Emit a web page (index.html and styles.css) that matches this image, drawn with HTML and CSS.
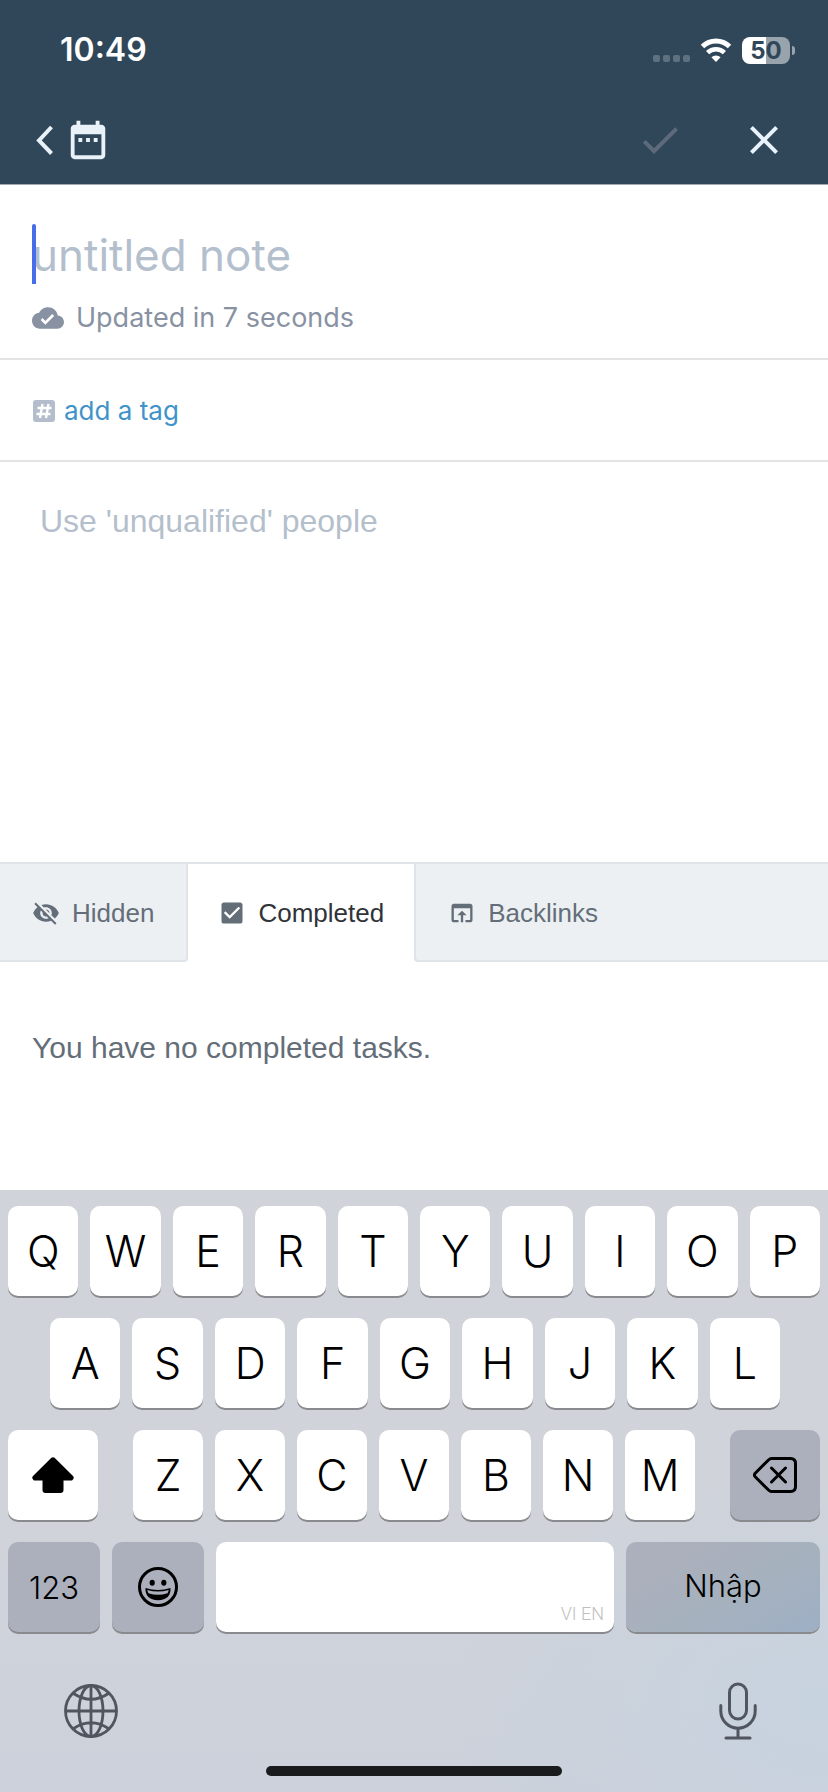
FILE: index.html
```html
<!DOCTYPE html>
<html lang="en">
<head>
<meta charset="utf-8">
<meta name="viewport" content="width=device-width, initial-scale=1">
<title>Note</title>
<link rel="stylesheet" href="styles.css">
</head>
<body>
<div class="screen">
  <header class="header">
    <div class="status">
      <time class="clock">10:49</time>
      <div class="indicators">
        <span class="cell"><i></i><i></i><i></i><i></i></span>
        <svg class="wifi" viewBox="0 0 32 24" aria-hidden="true">
          <path d="M2.500 8.500a19.500 19.500 0 0 1 27 0" fill="none" stroke="#fff" stroke-width="5"/>
          <path d="M7.600 14.600a12 12 0 0 1 16.800 0" fill="none" stroke="#fff" stroke-width="4.500"/>
          <path d="M16 24l-4.600-4.700a6.600 6.600 0 0 1 9.200 0z" fill="#fff"/>
        </svg>
        <span class="battery"><span class="battery-level">50</span><span class="battery-tip"></span></span>
      </div>
    </div>
    <nav class="nav">
      <button class="nav-button back" aria-label="Back to calendar">
        <svg class="chevron" viewBox="0 0 20 30"><path d="M16.500 2L4 15.500l12.500 13" fill="none" stroke="currentColor" stroke-width="4"/></svg>
        <svg class="calendar" viewBox="0 0 24 24"><path fill="currentColor" d="M9 11H7v2h2v-2zm4 0h-2v2h2v-2zm4 0h-2v2h2v-2zm2-7h-1V2h-2v2H8V2H6v2H5c-1.110 0-1.990.9-1.990 2L3 20c0 1.100.89 2 2 2h14c1.100 0 2-.9 2-2V6c0-1.100-.9-2-2-2zm0 16H5V9h14v11z"/></svg>
      </button>
      <div class="nav-actions">
        <button class="nav-button done" aria-label="Done" disabled><svg class="nav-icon" viewBox="0 0 24 24"><path fill="currentColor" d="M9 16.170L4.830 12l-1.420 1.410L9 19 21 7l-1.410-1.410z"/></svg></button>
        <button class="nav-button" aria-label="Close"><svg class="nav-icon" viewBox="0 0 24 24"><path fill="currentColor" d="M19 6.410L17.590 5 12 10.590 6.410 5 5 6.410 10.590 12 5 17.590 6.410 19 12 13.410 17.590 19 19 17.590 13.410 12z"/></svg></button>
      </div>
    </nav>
  </header>

  <main class="note">
    <section class="heading">
      <div class="title-field">
        <input class="title" type="text" placeholder="untitled note" aria-label="Note title">
        <span class="caret"></span>
      </div>
      <p class="updated">
        <svg class="cloud" viewBox="0 0 24 24" aria-hidden="true"><path fill="currentColor" d="M19.350 10.040C18.670 6.590 15.640 4 12 4 9.110 4 6.600 5.640 5.350 8.040 2.340 8.360 0 10.910 0 14c0 3.310 2.690 6 6 6h13c2.760 0 5-2.240 5-5 0-2.640-2.050-4.780-4.650-4.960zM10 17l-3.500-3.500 1.410-1.410L10 14.170 15.180 9l1.410 1.410L10 17z"/></svg>
        <span>Updated in 7 seconds</span>
      </p>
    </section>
    <section class="tags">
      <svg class="hash" viewBox="0 0 22 22" aria-hidden="true"><rect width="22" height="22" rx="3" fill="#b4bdcb"/><path d="M9.500 4L7 18M15.500 4L13 18M4.500 8h14M3.500 14h14" fill="none" stroke="#fff" stroke-width="2.400"/></svg>
      <a class="add-tag" href="#">add a tag</a>
    </section>
    <textarea class="editor" placeholder="Use 'unqualified' people" aria-label="Note text"></textarea>
    <div class="tabs" role="tablist">
      <button class="tab tab-first" role="tab"><svg class="tab-icon" viewBox="0 0 24 24"><path fill="currentColor" d="M12 7c2.760 0 5 2.240 5 5 0 .65-.13 1.260-.36 1.830l2.920 2.920c1.510-1.260 2.700-2.890 3.430-4.750-1.730-4.390-6-7.500-11-7.500-1.400 0-2.740.25-3.980.7l2.160 2.160C10.740 7.130 11.350 7 12 7zM2 4.270l2.280 2.280.46.46C3.080 8.300 1.780 10.020 1 12c1.730 4.390 6 7.500 11 7.500 1.550 0 3.030-.3 4.380-.84l.42.42L19.730 22 21 20.730 3.270 3 2 4.270zM7.530 9.800l1.550 1.550c-.05.21-.08.43-.08.65 0 1.660 1.340 3 3 3 .22 0 .44-.03.65-.08l1.550 1.550c-.67.33-1.410.53-2.200.53-2.760 0-5-2.240-5-5 0-.79.2-1.530.53-2.200zm4.310-.78l3.150 3.150.02-.16c0-1.660-1.340-3-3-3l-.17.01z"/></svg>Hidden</button>
      <button class="tab tab-active" role="tab" aria-selected="true"><svg class="tab-icon" viewBox="0 0 24 24"><path fill="currentColor" d="M19 3H5c-1.110 0-2 .9-2 2v14c0 1.100.89 2 2 2h14c1.110 0 2-.9 2-2V5c0-1.100-.89-2-2-2zm-9 14l-5-5 1.410-1.410L10 14.170l7.590-7.590L19 8l-9 9z"/></svg>Completed</button>
      <button class="tab tab-last" role="tab"><svg class="tab-icon" viewBox="0 0 24 24"><path fill="currentColor" d="M19 4H5c-1.110 0-2 .9-2 2v12c0 1.100.89 2 2 2h4v-2H5V8h14v10h-4v2h4c1.100 0 2-.9 2-2V6c0-1.100-.89-2-2-2zm-7 6l-4 4h3v6h2v-6h3l-4-4z"/></svg>Backlinks</button>
    </div>
    <p class="empty">You have no completed tasks.</p>
  </main>

  <section class="keyboard" aria-label="Keyboard">
    <div class="row">
      <button class="key">Q</button><button class="key">W</button><button class="key">E</button><button class="key">R</button><button class="key">T</button><button class="key">Y</button><button class="key">U</button><button class="key">I</button><button class="key">O</button><button class="key">P</button>
    </div>
    <div class="row row-inset">
      <button class="key">A</button><button class="key">S</button><button class="key">D</button><button class="key">F</button><button class="key">G</button><button class="key">H</button><button class="key">J</button><button class="key">K</button><button class="key">L</button>
    </div>
    <div class="row row-shift">
      <button class="key" aria-label="Shift"><svg class="shift-icon" viewBox="0 0 42 36"><path d="M19.400.8q1.600-1.300 3.200 0L41 19q2 2.400-1 4.500h-8.500V33q0 3-3 3h-15q-3 0-3-3v-9.500H2q-3-2.100-1-4.500z"/></svg></button>
      <div class="letters">
        <button class="key">Z</button><button class="key">X</button><button class="key">C</button><button class="key">V</button><button class="key">B</button><button class="key">N</button><button class="key">M</button>
      </div>
      <button class="key key-dark" aria-label="Delete"><svg class="delete-icon" viewBox="0 0 44 36"><path d="M18.500 1.500h19q5 0 5 5v23q0 5-5 5h-19q-1.500 0-3-1.500L2.200 19.800q-1.500-1.800 0-3.600L15.500 3q1.500-1.500 3-1.500zM18.500 11l14 14M32.500 11l-14 14" fill="none" stroke="#000" stroke-width="3" stroke-linecap="round" stroke-linejoin="round"/></svg></button>
    </div>
    <div class="row row-space">
      <button class="key key-dark key-word">123</button>
      <button class="key key-dark" aria-label="Emoji"><svg class="emoji-icon" viewBox="0 0 40 40"><circle cx="20" cy="20" r="18.500" fill="none" stroke="#000" stroke-width="3"/><ellipse cx="14.200" cy="15.700" rx="2.600" ry="3"/><ellipse cx="25.800" cy="15.700" rx="2.600" ry="3"/><path d="M7.500 21q12.500 4 25 0 .6 11.800-12.500 12.300Q6.900 32.800 7.500 21z"/><path d="M9.300 23q10.700 3 21.400 0-.3 1.800-1.200 3.200-9.500 3.300-19 0Q9.600 24.800 9.300 23z" fill="#abb0bc"/></svg></button>
      <button class="key key-space">VI EN</button>
      <button class="key key-word key-return">Nhập</button>
    </div>
    <div class="dock">
      <button class="dock-button" aria-label="Next keyboard"><svg class="globe" viewBox="0 0 54 54"><g fill="none" stroke="#50555f" stroke-width="2.800"><circle cx="27" cy="27" r="25.500"/><ellipse cx="27" cy="27" rx="12" ry="25.500"/><path d="M27 1v52M1 27h52M9.500 9.500Q27 21 44.500 9.500M9.500 44.500Q27 33 44.500 44.500"/></g></svg></button>
      <button class="dock-button" aria-label="Dictate"><svg class="mic" viewBox="0 0 38 58"><g fill="none" stroke="#50555f" stroke-width="3" stroke-linecap="round"><rect x="10.500" y="2" width="17" height="35" rx="8.500"/><path d="M1.800 23.500v5.500a17.200 17.200 0 0 0 34.400 0v-5.500M19 46.500V56M7 56h24"/></g></svg></button>
    </div>
    <div class="home-bar"></div>
  </section>
</div>
</body>
</html>
```

FILE: styles.css
```css
* { box-sizing: border-box; }

body {
  margin: 0;
  background: #fff;
  font-family: "Liberation Sans", Arial, sans-serif;
}

button {
  margin: 0;
  padding: 0;
  border: 0;
  background: none;
  color: inherit;
  font: inherit;
}

svg { display: block; flex: none; }
p { margin: 0; }

.screen {
  display: flex;
  flex-direction: column;
  min-height: 100vh;
}

/* Header */
.header {
  padding-bottom: 8px;
  background: #304759;
  border-bottom: 1px solid #a3a9ae;
  color: #e9f1f9;
}

.status {
  display: flex;
  justify-content: space-between;
  align-items: center;
  height: 100px;
  padding: 0 33px 0 60px;
}

.clock {
  color: #fff;
  font: 600 32px/40px Inter, sans-serif;
}

.indicators {
  display: flex;
  align-items: center;
  gap: 10px;
}

.cell {
  display: flex;
  gap: 3px;
  padding-top: 16px;
}

.cell i {
  width: 7px;
  height: 7px;
  border-radius: 2px;
  background: #5d7181;
}

.wifi { width: 32px; height: 24px; }

.battery {
  display: flex;
  align-items: center;
  gap: 2px;
}

.battery-level {
  width: 48px;
  border-radius: 8px;
  background: linear-gradient(to right, #fff 50%, #98a3ac 50%);
  color: #304759;
  font: 700 24px/27px Inter, sans-serif;
  text-align: center;
}

.battery-tip {
  width: 3px;
  height: 9px;
  border-radius: 0 4px 4px 0;
  background: #98a3ac;
}

.nav {
  display: flex;
  justify-content: space-between;
  align-items: center;
  height: 76px;
  padding: 3px 40px 0 35px;
}

.nav-button {
  display: flex;
  align-items: center;
  gap: 10px;
}

.nav-actions { display: flex; gap: 56px; }
.done { color: #5d6a7b; }
.chevron { width: 20px; height: 30px; }
.calendar { width: 46px; height: 46px; }
.nav-icon { width: 48px; height: 48px; }

/* Note */
.note {
  display: flex;
  flex: 1;
  flex-direction: column;
}

.heading {
  padding: 39px 32px 22px;
  border-bottom: 2px solid #e2e4e6;
}

.title-field { position: relative; }

.title {
  display: block;
  width: 100%;
  height: 62px;
  padding: 0;
  border: 0;
  outline: 0;
  background: none;
  font: 400 44px/62px Inter, sans-serif;
}

.title::placeholder { color: #b4bfcd; opacity: 1; }

.caret {
  position: absolute;
  top: 0;
  left: 0;
  width: 4px;
  height: 60px;
  border-radius: 2px 2px 0 0;
  background: #476eea;
}

.updated {
  display: flex;
  align-items: center;
  gap: 12px;
  margin-top: 14px;
  color: #8892a2;
  font: 400 27px/36px Inter, sans-serif;
}

.cloud { width: 32px; height: 32px; }

.tags {
  display: flex;
  align-items: center;
  gap: 9px;
  height: 102px;
  padding: 2px 33px 0;
  border-bottom: 2px solid #e2e4e6;
}

.hash { width: 22px; height: 22px; }

.add-tag {
  color: #3f93c9;
  font: 400 26px/36px Inter, sans-serif;
  text-decoration: none;
}

.editor {
  flex: 1;
  width: 100%;
  min-height: 200px;
  padding: 39px 40px;
  border: 0;
  outline: 0;
  resize: none;
  font: 400 32px/40px "Liberation Sans", Arial, sans-serif;
}

.editor::placeholder { color: #b5bfcc; opacity: 1; }

.tabs {
  display: flex;
  height: 100px;
  border-top: 2px solid #e0e4e9;
}

.tab {
  display: flex;
  align-items: center;
  gap: 12px;
  padding: 2px 30px 0;
  background: #ecf0f3;
  border-bottom: 2px solid #dfe3ea;
  color: #646e79;
  font-size: 26px;
}

.tab-first {
  padding: 2px 32px 0;
  border-right: 2px solid #dfe3ea;
  border-radius: 0 0 4px 0;
}

.tab-active {
  background: #fff;
  border-color: #fff;
  color: #303338;
}

.tab-active .tab-icon { color: #646e79; }

.tab-last {
  flex: 1;
  padding: 2px 32px 0;
  border-left: 2px solid #dfe3ea;
  border-radius: 0 0 0 4px;
}

.tab-icon { width: 28px; height: 28px; }

.empty {
  padding: 67px 32px 123px;
  color: #646e79;
  font-size: 30px;
  line-height: 38px;
}

/* Keyboard */
.keyboard {
  display: flex;
  flex-direction: column;
  gap: 22px;
  padding: 16px 8px;
  background:
    radial-gradient(ellipse at 100% 85%, #c7d3df 0%, #c7d3df00 32%),
    linear-gradient(#d0d3da 60%, #ccd1db);
  color: #000;
  font-family: Inter, sans-serif;
}

.row {
  display: grid;
  grid-template-columns: repeat(10, 1fr);
  gap: 12px;
}

.row-inset {
  grid-template-columns: repeat(9, 1fr);
  padding: 0 40px 0 42px;
}

.row-shift {
  grid-template-columns: 90fr 562fr 90fr;
  gap: 35px;
}

.letters {
  display: grid;
  grid-template-columns: repeat(7, 1fr);
  gap: 12px;
}

.row-space { grid-template-columns: 92fr 92fr 398fr 194fr; }

.key {
  display: flex;
  justify-content: center;
  align-items: center;
  min-width: 0;
  height: 90px;
  border-radius: 10px;
  background: #fff;
  box-shadow: 0 2px 0 #898a8e;
  font-size: 43px;
  font-weight: 350;
}

.key-dark { background: #abb0bc; }
.key-word { font-size: 31px; }

.key-space {
  justify-content: flex-end;
  align-items: flex-end;
  padding: 0 10px 6px;
  color: #c0c0c2;
  font: 300 18px/24px Roboto, sans-serif;
}

.key-return {
  padding-bottom: 3px;
  background: linear-gradient(150deg, #abb0bc 25%, #a5b1be 60%, #9eafc5);
}

.shift-icon { width: 42px; height: 36px; }
.delete-icon { width: 44px; height: 36px; }
.emoji-icon { width: 40px; height: 40px; }

.dock {
  display: flex;
  justify-content: space-between;
  align-items: center;
  padding: 28px 63px 4px 56px;
}

.globe { width: 54px; height: 54px; }
.mic { width: 38px; height: 58px; }

.home-bar {
  align-self: center;
  width: 296px;
  height: 10px;
  border-radius: 5px;
  background: #1a1b1d;
}
```
